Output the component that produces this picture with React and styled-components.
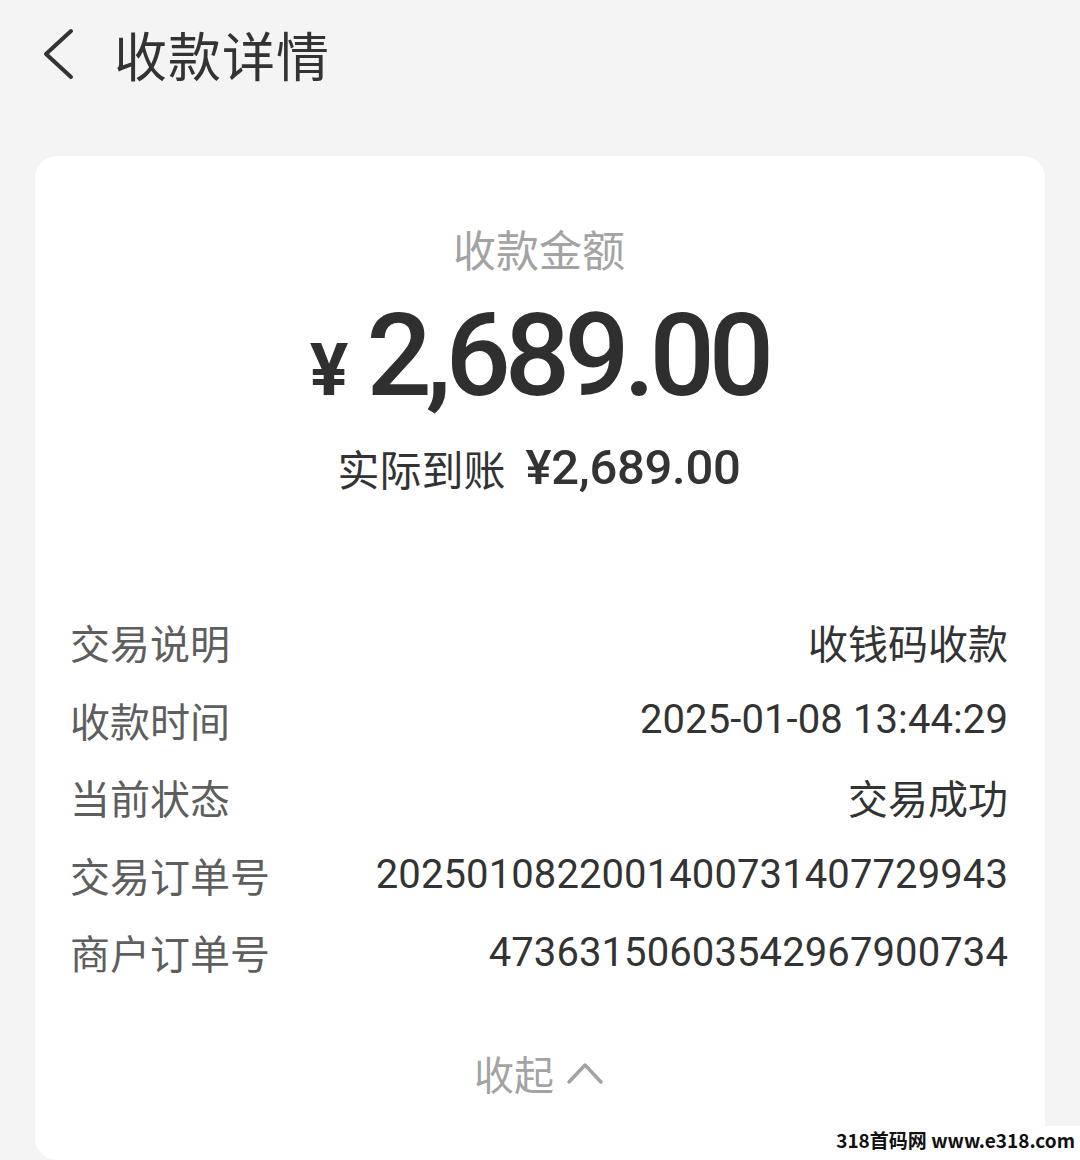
import React from 'react';
import styled, { createGlobalStyle } from 'styled-components';

const GlobalStyle = createGlobalStyle`
  html, body {
    margin: 0;
    padding: 0;
    background: #f4f4f4;
  }
  body {
    font-family: Roboto, "Noto Sans CJK SC", sans-serif;
  }
`;

const Page = styled.div`
  position: relative;
  width: 1080px;
  height: 1160px;
  overflow: hidden;
  background: #f4f4f4;
  display: flex;
  flex-direction: column;
`;

const Header = styled.header`
  height: 116px;
  display: flex;
  align-items: center;
  padding: 0 0 0 38px;
  box-sizing: border-box;
  gap: 36px;
  margin-top: -4px;
`;

const BackButton = styled.div`
  width: 40px;
  height: 56px;
  display: flex;
  align-items: center;
  justify-content: center;
`;

const Title = styled.h1`
  margin: 0;
  font-family: "Noto Sans CJK SC", sans-serif;
  font-size: 53px;
  font-weight: 400;
  color: #333;
  letter-spacing: 1px;
`;

const Card = styled.section`
  margin: 45px 35px 0 35px;
  height: 1010px;
  background: #fff;
  border-radius: 22px;
  box-sizing: border-box;
  padding: 0 37px 0 35px;
  display: flex;
  flex-direction: column;
`;

const Summary = styled.div`
  display: flex;
  flex-direction: column;
  align-items: center;
  padding-top: 66px;
`;

const SummaryLabel = styled.div`
  font-family: "Noto Sans CJK SC", sans-serif;
  font-size: 43px;
  line-height: 52px;
  color: #a3a3a3;
`;

const Amount = styled.div`
  display: flex;
  align-items: baseline;
  gap: 18px;
  margin-top: 22px;
  color: #2f2f2f;
`;

const Yen = styled.span`
  font-family: Roboto, sans-serif;
  font-weight: 700;
  font-size: 72px;
  line-height: 1;
`;

const AmountValue = styled.span`
  font-family: Roboto, sans-serif;
  font-weight: 500;
  font-size: 115px;
  line-height: 120px;
  letter-spacing: -6px;
`;

const Received = styled.div`
  display: flex;
  align-items: center;
  gap: 20px;
  margin-top: 26px;
  color: #333;
`;

const ReceivedLabel = styled.span`
  font-family: "Noto Sans CJK SC", sans-serif;
  font-size: 42px;
  line-height: 52px;
`;

const ReceivedValue = styled.span`
  font-family: Roboto, sans-serif;
  font-weight: 500;
  font-size: 49px;
  line-height: 52px;
  letter-spacing: -0.3px;
`;

const Details = styled.div`
  display: flex;
  flex-direction: column;
  margin-top: 109px;
`;

const Row = styled.div`
  display: flex;
  justify-content: space-between;
  align-items: center;
  height: 77.5px;
`;

const Label = styled.span`
  font-family: "Noto Sans CJK SC", sans-serif;
  font-size: 40px;
  color: #5e5e5e;
`;

const Value = styled.span`
  font-family: ${({ $num }) => ($num ? 'Roboto, sans-serif' : '"Noto Sans CJK SC", sans-serif')};
  font-size: 40px;
  color: #333;
  letter-spacing: ${({ $num }) => ($num ? '0.1px' : '0')};
`;

const Collapse = styled.div`
  display: flex;
  align-items: center;
  justify-content: center;
  gap: 12px;
  margin-top: 56px;
  color: #a3a3a3;
`;

const CollapseText = styled.span`
  font-family: "Noto Sans CJK SC", sans-serif;
  font-size: 40px;
  line-height: 52px;
`;

const Watermark = styled.div`
  position: absolute;
  right: 0;
  bottom: 0;
  padding: 2px 5px 8px 12px;
  background: #fff;
  font-family: "Noto Sans CJK SC", "Open Sans", sans-serif;
  font-weight: 700;
  font-size: 19px;
  color: #111;
  line-height: 24px;
`;

const rows = [
  { label: '交易说明', value: '收钱码收款' },
  { label: '收款时间', value: '2025-01-08 13:44:29', num: true },
  { label: '当前状态', value: '交易成功' },
  { label: '交易订单号', value: '2025010822001400731407729943', num: true },
  { label: '商户订单号', value: '47363150603542967900734', num: true },
];

const App = () => (
  <>
    <GlobalStyle />
    <Page>
      <Header>
        <BackButton>
          <svg width="34" height="52" viewBox="0 0 34 52" fill="none">
            <path d="M30 3 L5 26 L30 49" stroke="#333" strokeWidth="4" strokeLinecap="round" strokeLinejoin="round" />
          </svg>
        </BackButton>
        <Title>收款详情</Title>
      </Header>

      <Card>
        <Summary>
          <SummaryLabel>收款金额</SummaryLabel>
          <Amount>
            <Yen>¥</Yen>
            <AmountValue>2,689.00</AmountValue>
          </Amount>
          <Received>
            <ReceivedLabel>实际到账</ReceivedLabel>
            <ReceivedValue>¥2,689.00</ReceivedValue>
          </Received>
        </Summary>

        <Details>
          {rows.map((row) => (
            <Row key={row.label}>
              <Label>{row.label}</Label>
              <Value $num={row.num}>{row.value}</Value>
            </Row>
          ))}
        </Details>

        <Collapse>
          <CollapseText>收起</CollapseText>
          <svg width="38" height="24" viewBox="0 0 38 24" fill="none">
            <path d="M3 21 L19 4 L35 21" stroke="#a3a3a3" strokeWidth="3.5" strokeLinecap="round" strokeLinejoin="round" />
          </svg>
        </Collapse>
      </Card>

      <Watermark>318首码网 www.e318.com</Watermark>
    </Page>
  </>
);

export default App;
